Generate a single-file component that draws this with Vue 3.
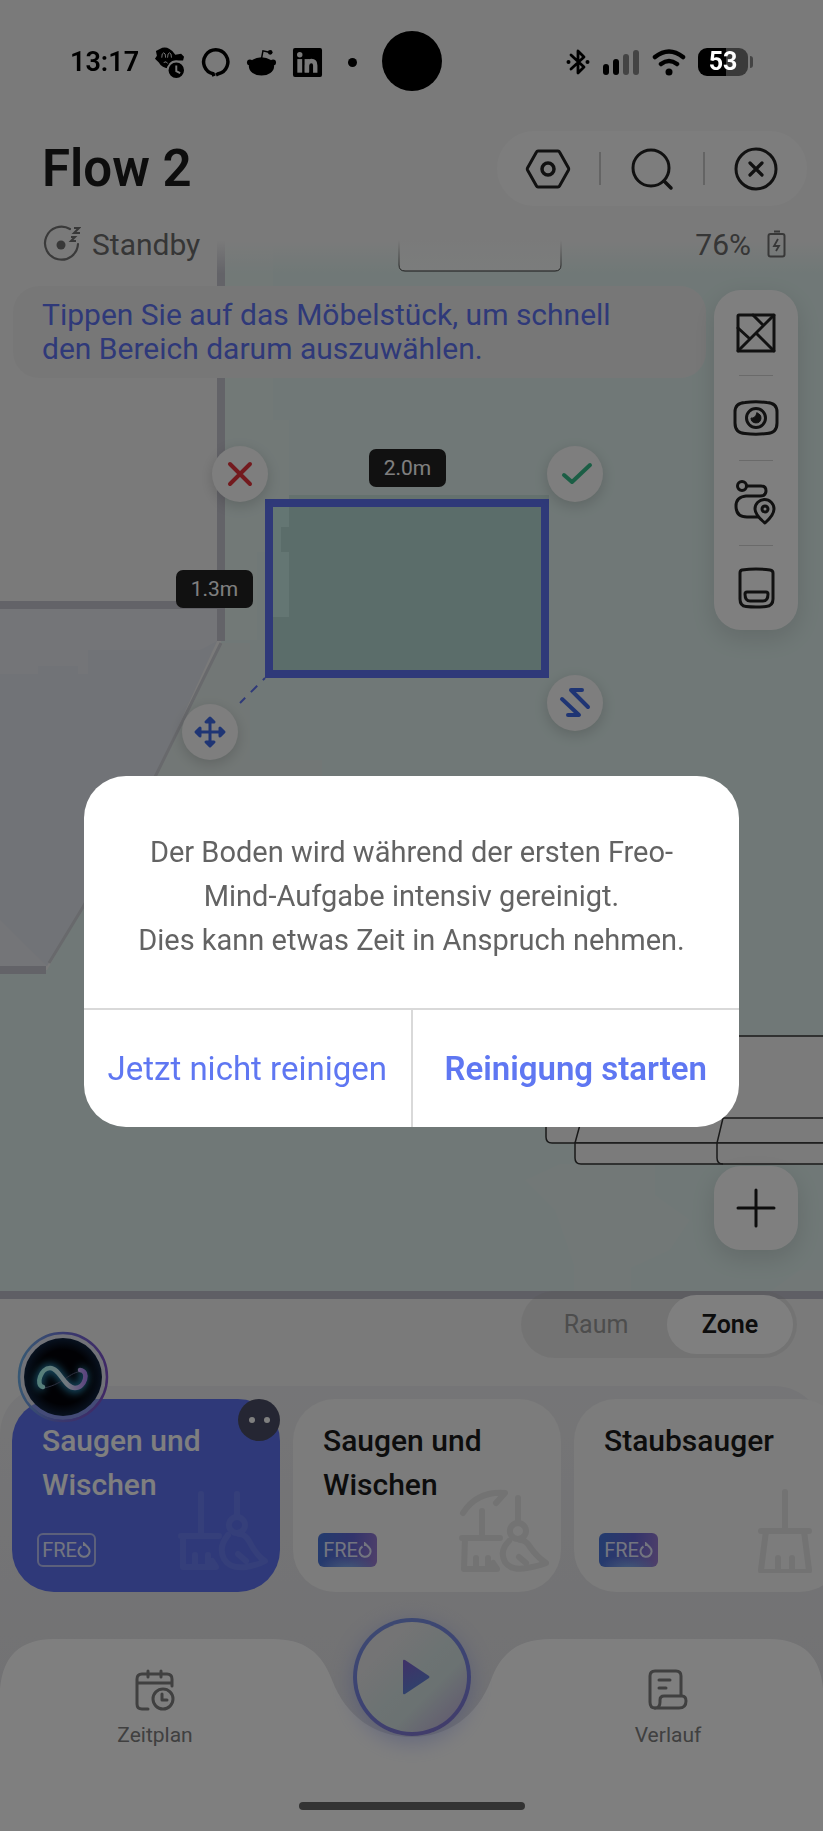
<template>
  <div class="app">
    <div class="status-bar">
      <div class="status-left">
        <span class="time">13:17</span>
        <svg class="sys-icon" viewBox="0 0 32 32" aria-hidden="true">
          <path d="M2 4 L6 2 Q11 -1 16 2 Q20 4 22 8 L28 7 L31 10 L30 14 H22 Q17 14 15 19 L16 22 Q8 22 5 16 L1 12 L3 9 Z" />
          <path d="M8 11 Q8 6 10 6 Q12 6 12 11 M14 11 Q14 6 16 6 Q18 6 18 11 M10 16 Q13 14 14 17" fill="none" stroke="#7a7a7a" stroke-width="1" />
          <circle cx="23" cy="24" r="9" stroke="#7a7a7a" stroke-width="2" />
          <path d="M23 19 V25 L27 27" fill="none" stroke="#7a7a7a" stroke-width="2" />
        </svg>
        <svg class="sys-icon" viewBox="0 0 32 32" aria-hidden="true">
          <path d="M14.5 30 L13.5 27.600 A12.5 12.5 0 1 1 19 27.600 L16.500 29" fill="none" stroke="#000" stroke-width="3.600" />
        </svg>
        <svg class="sys-icon" viewBox="0 0 32 32" aria-hidden="true">
          <ellipse cx="16" cy="20" rx="13" ry="9.500" />
          <circle cx="4" cy="16" r="3" />
          <circle cx="28" cy="16" r="3" />
          <path d="M16 12 L17.500 4 L24 5.500" fill="none" stroke="#000" stroke-width="1.500" />
          <circle cx="25" cy="5.500" r="2.400" />
        </svg>
        <svg class="sys-icon" viewBox="0 0 32 32" aria-hidden="true">
          <rect x="1" y="1" width="30" height="30" rx="2" />
          <g fill="#7a7a7a">
            <circle cx="8" cy="8" r="2.800" />
            <rect x="5.500" y="12.500" width="5" height="14" />
            <rect x="13" y="12.500" width="4.500" height="14" />
          </g>
          <path d="M15.500 26 V19 Q16 14.500 20 14.500 Q24 14.500 24 19 V26.500" fill="none" stroke="#7a7a7a" stroke-width="4.500" />
        </svg>
        <span class="more-dot"></span>
      </div>
      <span class="camera"></span>
      <div class="status-right">
        <svg width="24" height="28" viewBox="0 0 24 28" aria-hidden="true">
          <path d="M5 7 L18 19 L12 25 V3 L18 9 L5 21" fill="none" stroke="#000" stroke-width="2.800" stroke-linejoin="round" stroke-linecap="round" />
          <circle cx="2.500" cy="14" r="2" />
          <circle cx="21.500" cy="14" r="2" />
        </svg>
        <svg width="38" height="28" viewBox="0 0 38 28" aria-hidden="true">
          <rect x="1" y="16" width="6" height="11" rx="3" />
          <rect x="11" y="11" width="6" height="16" rx="3" />
          <rect x="21" y="6" width="6" height="21" rx="3" fill="#444" />
          <rect x="31" y="2" width="6" height="25" rx="3" fill="#444" />
        </svg>
        <svg width="34" height="28" viewBox="0 0 34 28" aria-hidden="true">
          <path d="M3 9 Q17 -2 31 9 M9 16 Q17 10 25 16" fill="none" stroke="#000" stroke-width="4.500" stroke-linecap="round" />
          <circle cx="17" cy="24" r="3.500" />
        </svg>
        <div class="sys-battery"><span class="sys-level">53</span></div>
      </div>
    </div>

    <header class="header">
      <h1 class="title">Flow 2</h1>
      <div class="header-actions">
        <button class="plain" aria-label="Einstellungen">
          <svg width="46" height="46" viewBox="0 0 46 46" class="line">
            <path d="M13 5 H33 Q34 5 34.500 6 L43.500 22 Q44 23 43.500 24 L34.500 40 Q34 41 33 41 H13 Q12 41 11.500 40 L2.500 24 Q2 23 2.500 22 L11.500 6 Q12 5 13 5 Z" />
            <circle cx="23" cy="23" r="6" stroke-width="3.500" />
          </svg>
        </button>
        <span class="bar"></span>
        <button class="plain" aria-label="Suchen">
          <svg width="46" height="46" viewBox="0 0 46 46" class="line">
            <circle cx="22" cy="22" r="18" />
            <path d="M35 35 L42 42" stroke-width="3.500" />
          </svg>
        </button>
        <span class="bar"></span>
        <button class="plain" aria-label="Schließen">
          <svg width="46" height="46" viewBox="0 0 46 46" class="line">
            <circle cx="23" cy="23" r="20" />
            <path d="M17 17 L29 29 M29 17 L17 29" stroke-width="3.200" />
          </svg>
        </button>
      </div>
    </header>

    <main class="map">
      <svg class="floor" viewBox="0 206 823 1180" preserveAspectRatio="xMidYMin slice" aria-hidden="true">
        <rect y="206" width="823" height="1180" fill="#f5f5f5" />
        <path d="M221 206 H823 V1295 H0 V970 H47 L83 907 L155 777 L221 643 Z" fill="#e0f1ee" />
        <path d="M225 206 H273 V420 H289 V552 H257 V640 H221 Z" fill="#e4f2ef" />
        <path d="M221 643 H250 V760 H322 V777 H155 Z" fill="#e5efec" />
        <path d="M525 1180 L560 1164 H655 V1195 L690 1220 L670 1250 L631 1268 V1295 H574 V1265 L555 1210 Z M765 1295 L800 1270 H823 V1295 Z" fill="#e4f0ee" />
        <path d="M0 609 H217 V641 L155 777 L83 907 L47 966 H0 Z" fill="#e9eaf0" />
        <path d="M0 674 H38 V666 H78 V674 H88 V650 H200 L217 641 L155 777 L83 907 L47 966 L20 940 L0 920 Z" fill="#e3e7ee" />
        <path d="M221 643 L155 777 L83 907 L49 963" fill="none" stroke="#d0d2d8" stroke-width="3" />
        <path d="M221 206 V641 M0 605 H218 M0 970 H46" fill="none" stroke="#c6c6d0" stroke-width="8" />
        <path d="M0 1295 H823" stroke="#bfbfca" stroke-width="8" />
        <rect x="0" y="1299" width="823" height="87" fill="#f5f5f5" />

        <path d="M399 206 V265 Q399 271 405 271 H555 Q561 271 561 265 V206 Z" fill="#f6faf9" stroke="#222" stroke-width="1" />
        <g fill="#f7f7f7" stroke="#333" stroke-width="1.500">
          <path d="M546 1036 H830 V1143 H552 Q546 1143 546 1137 Z" />
          <path d="M575 1143 H830 V1164 H581 Q575 1164 575 1158 Z" />
          <path d="M723 1118 H830 M584 1110 L575 1143 M723 1118 L717 1143 V1158 Q717 1164 723 1164" fill="none" />
        </g>

        <path d="M289 495 H549 V499 H289 Z" fill="#c9e2dd" />
        <rect x="269" y="503" width="276" height="171" fill="#b7dad5" />
        <path d="M273 507 H289 V527 H281 V552 H289 V617 H273 Z" fill="#c9ece6" />
        <rect x="269" y="503" width="276" height="171" fill="none" stroke="#5e73f2" stroke-width="8" />
        <path d="M265 678 L240 703" stroke="#5e73f2" stroke-width="2" stroke-dasharray="9 8" stroke-dashoffset="6" />
      </svg>
      <div class="fade"></div>

      <span class="measure measure-w">2.0m</span>
      <span class="measure measure-h">1.3m</span>
      <button class="pin pin-remove" aria-label="Löschen">
        <svg width="56" height="56" viewBox="-28 -28 56 56">
          <path d="M-10 -10 L10 10 M10 -10 L-10 10" stroke="#e6353c" />
        </svg>
      </button>
      <button class="pin pin-confirm" aria-label="Bestätigen">
        <svg width="56" height="56" viewBox="-28 -28 56 56">
          <path d="M-11 1 L-3 8 L15 -9" stroke="#37bd8a" />
        </svg>
      </button>
      <button class="pin pin-move" aria-label="Verschieben">
        <svg class="thin" width="56" height="56" viewBox="-28 -28 56 56">
          <path d="M0 -13 V13 M-13 0 H13" stroke="#3f6ae8" />
          <path d="M0 -14 L-4 -10 H4 Z M0 14 L-4 10 H4 Z M-14 0 L-10 -4 V4 Z M14 0 L10 -4 V4 Z" stroke="#3f6ae8" />
        </svg>
      </button>
      <button class="pin pin-resize" aria-label="Größe ändern">
        <svg width="56" height="56" viewBox="-28 -28 56 56">
          <path d="M7 -13 H-4 L13 4 M-13 -4 L4 12 H-7" stroke="#3f6ae8" />
        </svg>
      </button>

      <div class="map-content">
        <div class="state-row">
          <div class="state">
            <svg width="38" height="38" viewBox="0 0 38 38" aria-hidden="true">
              <path d="M27 4 A16.500 16.500 0 1 0 35 19" fill="none" stroke="#757575" stroke-width="2.200" stroke-linecap="round" />
              <circle cx="18" cy="20" r="4.500" fill="#707070" />
              <path d="M31 3 H36 L31 8 H37 M28 12 H32 L28 16 H33" fill="none" stroke="#707070" stroke-width="2" />
            </svg>
            <span>Standby</span>
          </div>
          <div class="state charge">
            <span>76%</span>
            <svg width="20" height="28" viewBox="0 0 20 28" aria-hidden="true">
              <path d="M7 1.500 H13" stroke="#707070" stroke-width="2" />
              <rect x="1.500" y="4" width="16" height="22.500" rx="2" fill="none" stroke="#707070" stroke-width="2" />
              <path d="M11 9 L7 16 H12 L9 21" fill="none" stroke="#707070" stroke-width="1.800" />
            </svg>
          </div>
        </div>

        <div class="tools-row">
          <p class="hint">Tippen Sie auf das Möbelstück, um schnell<br />den Bereich darum auszuwählen.</p>
          <div class="toolbar">
            <button class="tool" aria-label="Karte">
              <svg width="46" height="46" viewBox="0 0 46 46" class="line">
                <rect x="5" y="5" width="36" height="36" rx="1" />
                <path d="M5 41 L41 5 M5 18 L17 29 M20 5 L30 15 M23 23 L41 41" />
              </svg>
            </button>
            <button class="tool" aria-label="Ansicht">
              <svg width="46" height="46" viewBox="0 0 46 46" class="line">
                <path d="M12 7.500 Q23 6 34 7.500 Q44 8 44 17 V28 Q44 38 34 38.500 Q23 40 12 38.500 Q2 38 2 28 V17 Q2 8 12 7.500 Z" />
                <circle cx="23" cy="23" r="9.500" />
                <path d="M24 18 A5 5 0 1 1 18 23 Q22 24 24 18 Z" fill="#222" stroke-width="1" />
              </svg>
            </button>
            <button class="tool" aria-label="Route">
              <svg width="46" height="46" viewBox="0 0 46 46" class="line">
                <circle cx="9" cy="6" r="4.500" />
                <path d="M14 6 H28 Q33 6 33 11 Q33 16 27 16 H13 Q3 17 3 26 Q3 37 14 37 H25" />
                <path d="M32 43 Q22 35 22 29 A9.500 9.500 0 0 1 41 29 Q41 35 32 43 Z" />
                <circle cx="32" cy="29" r="3" />
              </svg>
            </button>
            <button class="tool" aria-label="Station">
              <svg width="46" height="46" viewBox="0 0 46 46" class="line">
                <path d="M9 5 Q23 3 37 5 Q40 5.500 40 8 V34 Q40 41 33 41.500 Q23 42.500 13 41.500 Q7 41 7 34 V8 Q7 5.500 9 5 Z" />
                <path d="M14 27 H33 Q35 27 35 29 Q35 36 30 36 H17 Q12 36 12 29 Q12 27 14 27 Z" />
              </svg>
            </button>
          </div>
        </div>

        <button class="add" aria-label="Hinzufügen">
          <svg width="40" height="40" viewBox="0 0 40 40">
            <path d="M20 2 V38 M2 20 H38" stroke="#1a1a1a" stroke-width="3" stroke-linecap="round" />
          </svg>
        </button>

        <div class="tabs" role="tablist">
          <button
            v-for="tab in tabs"
            :key="tab"
            class="tab"
            :class="{ active: tab === activeTab }"
            role="tab"
            :aria-selected="tab === activeTab"
            @click="activeTab = tab"
          >{{ tab }}</button>
        </div>
      </div>
    </main>

    <section class="panel">
      <div class="modes">
        <button
          v-for="mode in modes"
          :key="mode.id"
          class="mode"
          :class="{ selected: mode.id === activeMode }"
          @click="activeMode = mode.id"
        >
          <span class="mode-name">{{ mode.name }}</span>
          <span class="freo">
            <span>FRE</span>
            <svg width="14" height="16" viewBox="0 0 14 16" aria-hidden="true">
              <path d="M4.500 4.500 A5.500 5.500 0 1 0 11 5.500 L7 1.500 V4" fill="none" stroke="currentColor" stroke-width="2" />
            </svg>
          </span>
          <svg class="art" viewBox="0 0 90 84" aria-hidden="true">
            <path v-for="(d, i) in mode.art" :key="i" :d="d" />
          </svg>
          <span v-if="mode.id === activeMode" class="eyes"><i></i><i></i></span>
        </button>
      </div>

      <button class="mind" aria-label="Freo Mind">
        <svg width="92" height="92" viewBox="0 0 92 92">
          <defs>
            <linearGradient id="ring" x1="0" y1="0.400" x2="1" y2="0.500">
              <stop offset="0" stop-color="#6fb0e8" />
              <stop offset="0.500" stop-color="#7272dc" />
              <stop offset="1" stop-color="#8052cc" />
            </linearGradient>
            <radialGradient id="disc">
              <stop offset="0.700" stop-color="#020208" />
              <stop offset="1" stop-color="#102440" />
            </radialGradient>
            <linearGradient id="loop">
              <stop offset="0" stop-color="#a8fff4" />
              <stop offset="0.600" stop-color="#e6f2ff" />
              <stop offset="1" stop-color="#b78cff" />
            </linearGradient>
            <filter id="glow" x="-30%" y="-60%" width="160%" height="220%">
              <feGaussianBlur stdDeviation="4" />
            </filter>
          </defs>
          <circle cx="46" cy="46" r="43" fill="#c8cdea" fill-opacity="0.400" />
          <circle cx="46" cy="46" r="44" fill="none" stroke="url(#ring)" stroke-width="2.500" />
          <circle cx="46" cy="46" r="39" fill="url(#disc)" />
          <path d="M26 57 C18 56 23 37 33 37 C43 37 47 58 58 58 C67 58 71 41 63 39" fill="none" stroke="#38b8f0" stroke-width="7" filter="url(#glow)" />
          <path d="M27 57 C48 53 54 38 68 41" fill="none" stroke="#5a6080" stroke-width="1" />
          <path d="M26 56 C18 54 24 37 33 37 C43 37 47 57 58 57 C68 57 73 40 63 39" fill="none" stroke="url(#loop)" stroke-width="4.500" stroke-linecap="round" />
        </svg>
      </button>

      <nav class="bottom-nav">
        <svg class="nav-bg" viewBox="0 0 823 192" preserveAspectRatio="none" aria-hidden="true">
          <path d="M0 192 V50 Q4 0 54 0 H272 C305 0 322 14 332 41 C346 78 376 98 411.500 98 C447 98 477 78 491 41 C501 14 518 0 551 0 H769 Q819 0 823 50 V192 Z" fill="#fff" />
        </svg>
        <a class="nav-item" href="#zeitplan">
          <svg width="42" height="42" viewBox="0 0 42 42" class="nav-icon">
            <path d="M38 17 V10 Q38 5 33 5 H8 Q3 5 3 10 V35 Q3 40 8 40 H14 M3 14 H38 M14 2 V8 M27 2 V8" />
            <circle cx="29" cy="30" r="10" />
            <path d="M28 25 V31 H33" />
          </svg>
          <span>Zeitplan</span>
        </a>
        <a class="nav-item" href="#verlauf">
          <svg width="42" height="42" viewBox="0 0 42 42" class="nav-icon">
            <path d="M8 39 Q3 39 3 33 V7 Q3 2 8 2 H29 Q34 2 34 7 V26 M12 11 H23 M12 19 H19" />
            <path d="M8 39 Q13 39 13 33 V31 Q13 27 17 27 H35 Q39 27 39 32 Q39 39 32 39 Z" />
          </svg>
          <span>Verlauf</span>
        </a>
        <button class="play" aria-label="Starten">
          <svg width="30" height="38" viewBox="0 0 30 38">
            <defs>
              <linearGradient id="tri" x1="0" y1="0" x2="0.400" y2="1">
                <stop offset="0" stop-color="#8062d0" />
                <stop offset="1" stop-color="#5e86d8" />
              </linearGradient>
            </defs>
            <path d="M2 3 Q2 1 4 2 L28 18 Q29 19 28 20 L4 36 Q2 37 2 35 Z" fill="url(#tri)" />
          </svg>
        </button>
        <span class="home-indicator"></span>
      </nav>
    </section>

    <div v-if="dialogOpen" class="overlay">
      <div class="dialog" role="dialog" aria-modal="true" aria-labelledby="dialog-text">
        <p id="dialog-text" class="dialog-text">Der Boden wird während der ersten Freo-<br />Mind-Aufgabe intensiv gereinigt.<br />Dies kann etwas Zeit in Anspruch nehmen.</p>
        <div class="dialog-actions">
          <button class="dialog-btn" @click="dialogOpen = false">Jetzt nicht reinigen</button>
          <button class="dialog-btn primary" @click="dialogOpen = false">Reinigung starten</button>
        </div>
      </div>
    </div>
  </div>
</template>

<script setup>
import { ref } from 'vue';

const dialogOpen = ref(true);

const tabs = ['Raum', 'Zone'];
const activeTab = ref('Zone');

const activeMode = ref(1);
const modes = [
  {
    id: 1,
    name: 'Saugen und Wischen',
    art: [
      'M23 5 V46 M3 47 H41 M5 47 V78 H38 L34 72 M17 66 V78 M30 66 V78',
      'M59 5 V28 M59 28 A8 8 0 1 1 58.900 28 Z',
      'M50 46 Q40 58 46 70 Q52 80 68 78 Q80 76 87 72 Q78 66 71 52 Q67 45 61 45 M60 65 L68 72',
    ],
  },
  {
    id: 2,
    name: 'Saugen und Wischen',
    art: [
      'M4 24 Q18 2 46 4 L37 14',
      'M23 22 V48 M3 49 H41 M6 49 L5 80 H38 L34 74 M17 69 V80 M29 69 V80',
      'M59 9 V33 M59 34 A8 8 0 1 1 58.900 34 Z',
      'M50 52 Q40 62 46 73 Q52 82 68 79 Q80 77 87 74 Q78 68 71 58 Q67 51 61 51 M60 68 L67 74',
    ],
  },
  {
    id: 3,
    name: 'Staubsauger',
    art: ['M45 3 V42 M21 42 H69 M26 42 L21 81 Q21 83 23 83 H67 Q69 83 69 81 L64 42 M38 69 V82 M52 69 V82'],
  },
];
</script>

<style>
body {
  background: #f5f5f5;
}
</style>

<style scoped>
.app {
  position: relative;
  display: flex;
  flex-direction: column;
  min-height: 100vh;
  overflow: hidden;
  background: #f5f5f5;
  color: #1a1a1a;
  font-family: Roboto, "Noto Sans", sans-serif;
}

button {
  border: 0;
  padding: 0;
  background: none;
  font: inherit;
  color: inherit;
  cursor: pointer;
}

svg {
  display: block;
}

.line {
  fill: none;
  stroke: #222;
  stroke-width: 3;
  stroke-linecap: round;
  stroke-linejoin: round;
}

/* 系统状态栏,位于遮罩之上 */
.status-bar {
  position: relative;
  z-index: 20;
  display: flex;
  justify-content: space-between;
  align-items: center;
  height: 124px;
  padding: 0 70px;
  box-sizing: border-box;
  color: #000;
}

.status-left,
.status-right {
  display: flex;
  align-items: center;
}

.status-left {
  gap: 15px;
}

.status-right {
  gap: 12px;
}

.time {
  font-size: 27px;
  font-weight: 600;
}

.sys-icon {
  width: 31px;
  height: 31px;
}

.more-dot {
  width: 9px;
  height: 9px;
  margin-left: 10px;
  border-radius: 50%;
  background: #000;
}

.camera {
  position: absolute;
  left: 50%;
  top: 31px;
  width: 60px;
  height: 60px;
  margin-left: -30px;
  border-radius: 50%;
  background: #000;
}

.sys-battery {
  display: flex;
  align-items: center;
}

.sys-battery::after {
  content: '';
  width: 3px;
  height: 12px;
  margin-left: 2px;
  border-radius: 0 3px 3px 0;
  background: #444;
}

.sys-level {
  width: 50px;
  border-radius: 9px;
  background: linear-gradient(90deg, #000 56%, #3a3a3a 56%);
  color: #fff;
  font-size: 25px;
  font-weight: 700;
  line-height: 28px;
  text-align: center;
}

.header {
  display: flex;
  justify-content: space-between;
  align-items: center;
  padding: 7px 16px 0 42px;
}

.title {
  margin: 0;
  font-size: 51px;
  font-weight: 600;
  line-height: 75px;
}

.header-actions {
  display: flex;
  align-items: center;
  gap: 28px;
  height: 75px;
  padding: 0 28px;
  border-radius: 38px;
  background: #fbfbfb;
}

.bar {
  width: 2px;
  height: 33px;
  background: #c8c8c8;
}

.map {
  position: relative;
  display: flex;
  flex: 1;
  min-height: 1180px;
}

.floor {
  position: absolute;
  inset: 0;
  width: 100%;
  height: 100%;
}

.fade {
  position: absolute;
  top: 0;
  left: 0;
  right: 0;
  height: 68px;
  background: linear-gradient(#f5f5f5 50%, rgba(245, 245, 245, 0));
}

.map-content {
  position: relative;
  display: flex;
  flex: 1;
  flex-direction: column;
  align-items: stretch;
  pointer-events: none;
}

.map-content button {
  pointer-events: auto;
}

.state-row {
  display: flex;
  justify-content: space-between;
  align-items: center;
  height: 76px;
  padding: 0 36px 0 43px;
  color: #6c6c6c;
  font-size: 30px;
}

.state {
  display: flex;
  align-items: center;
  gap: 11px;
}

.charge {
  gap: 16px;
}

.tools-row {
  display: flex;
  align-items: flex-start;
  gap: 8px;
  padding: 4px 25px 0 13px;
}

.hint {
  flex: 1;
  margin: 0;
  padding: 12px 29px;
  border-radius: 26px;
  background: #efefef;
  color: #5e73f2;
  font-size: 30px;
  line-height: 34px;
}

.toolbar {
  display: flex;
  flex-direction: column;
  width: 84px;
  margin-top: 4px;
  border-radius: 27px;
  background: #fff;
  box-shadow: 0 8px 24px rgba(0, 0, 0, 0.12);
}

.tool {
  position: relative;
  display: grid;
  place-items: center;
  height: 85px;
}

.tool + .tool::before {
  content: '';
  position: absolute;
  top: 0;
  left: 25px;
  right: 25px;
  height: 1px;
  background: #d4d4d4;
}

.measure {
  position: absolute;
  width: 77px;
  border-radius: 7px;
  background: #222;
  color: #fff;
  font-size: 21px;
  line-height: 38px;
  text-align: center;
}

.measure-w {
  left: 369px;
  top: 243px;
}

.measure-h {
  left: 176px;
  top: 364px;
}

.pin {
  position: absolute;
  z-index: 2;
  width: 56px;
  height: 56px;
  border-radius: 50%;
  background: #fcfcfc;
  box-shadow: 0 4px 14px rgba(0, 0, 0, 0.16);
}

.pin path {
  fill: none;
  stroke-width: 4;
  stroke-linecap: round;
  stroke-linejoin: round;
}

.thin path {
  stroke-width: 3;
}

.pin-remove {
  left: 212px;
  top: 240px;
}

.pin-confirm {
  left: 547px;
  top: 240px;
}

.pin-move {
  left: 182px;
  top: 498px;
}

.pin-resize {
  left: 547px;
  top: 469px;
}

.add {
  display: grid;
  place-items: center;
  align-self: flex-end;
  width: 84px;
  height: 84px;
  margin: auto 25px 41px 0;
  border-radius: 27px;
  background: #fff;
  box-shadow: 0 8px 24px rgba(0, 0, 0, 0.12);
}

.tabs {
  display: flex;
  align-self: flex-end;
  margin: 0 26px 28px 0;
  padding: 4px;
  border-radius: 34px;
  background: rgba(160, 160, 160, 0.16);
  font-size: 25px;
}

.tab {
  width: 126px;
  height: 59px;
  border-radius: 30px;
  color: #9a9a9a;
}

.tab:first-child {
  width: 142px;
}

.tab.active {
  background: #fff;
  color: #1a1a1a;
  font-weight: 600;
}

.panel {
  position: relative;
  padding-top: 13px;
  border-radius: 48px 48px 0 0;
  background: linear-gradient(#ebebee, #e2e2e5);
}

.modes {
  display: flex;
  gap: 13px;
  overflow: hidden;
  padding: 0 0 47px 12px;
}

.mode {
  position: relative;
  display: flex;
  flex: 0 0 268px;
  flex-direction: column;
  align-items: flex-start;
  justify-content: space-between;
  height: 193px;
  padding: 20px 25px 25px;
  box-sizing: border-box;
  border-radius: 42px;
  background: #f8f8f8;
  text-align: left;
}

.mode.selected {
  background: #5e73f2;
  color: #fff;
}

.mode-name {
  width: 190px;
  padding-left: 5px;
  font-size: 30px;
  font-weight: 500;
  line-height: 44px;
}

.freo {
  display: flex;
  align-items: center;
  justify-content: center;
  width: 59px;
  height: 34px;
  box-sizing: border-box;
  border-radius: 6px;
  background: radial-gradient(ellipse 30px 16px at 50% 110%, #86b8f2, rgba(134, 184, 242, 0)), linear-gradient(100deg, #4a76dc 10%, #6668d8 55%, #a080d4);
  color: #e6eaff;
  font-size: 20px;
  line-height: 34px;
}

.selected .freo {
  border: 2px solid #b8c1f6;
  background: none;
  line-height: 30px;
}

.art {
  position: absolute;
  right: 12px;
  bottom: 19px;
  width: 90px;
  height: 84px;
  fill: none;
  stroke: #e6e6e6;
  stroke-width: 6;
  stroke-linecap: round;
  stroke-linejoin: round;
}

.selected .art {
  stroke: #6b7ef4;
}

.eyes {
  position: absolute;
  top: 0;
  right: 0;
  display: flex;
  align-items: center;
  justify-content: center;
  gap: 9px;
  width: 42px;
  height: 42px;
  border-radius: 50%;
  background: #4a4d66;
}

.eyes i {
  width: 6px;
  height: 6px;
  border-radius: 50%;
  background: #fff;
}

.mind {
  position: absolute;
  left: 17px;
  top: -55px;
  border-radius: 50%;
}

.bottom-nav {
  position: relative;
  display: flex;
  justify-content: space-between;
  min-height: 192px;
}

.nav-bg {
  position: absolute;
  inset: 0;
  width: 100%;
  height: 100%;
}

.nav-item {
  position: relative;
  display: flex;
  flex-direction: column;
  align-items: center;
  gap: 12px;
  width: 310px;
  padding-top: 30px;
  color: #808080;
  font-size: 21px;
  line-height: 25px;
  text-decoration: none;
}

.nav-icon {
  fill: none;
  stroke: #808080;
  stroke-width: 3;
  stroke-linecap: round;
  stroke-linejoin: round;
}

.play {
  position: absolute;
  left: 50%;
  top: -21px;
  display: grid;
  place-items: center;
  width: 118px;
  height: 118px;
  margin-left: -59px;
  padding-left: 8px;
  box-sizing: border-box;
  border: 4px solid transparent;
  border-radius: 50%;
  background: linear-gradient(135deg, #e8e8ea 25%, #d9e6e6 50%, #d6e4e4 65%, #c8c2e0 85%, #dcdce8) padding-box, linear-gradient(160deg, #7a94e4, #7a84e4 60%, #8676d0) border-box;
  box-shadow: 0 6px 22px rgba(94, 115, 242, 0.35);
}

.home-indicator {
  position: absolute;
  left: 50%;
  bottom: 21px;
  width: 226px;
  height: 8px;
  margin-left: -113px;
  border-radius: 4px;
  background: #666;
}

.overlay {
  position: fixed;
  inset: 0;
  z-index: 10;
  display: flex;
  align-items: center;
  justify-content: center;
  padding: 72px 84px 0;
  background: rgba(0, 0, 0, 0.5);
}

.dialog {
  width: 100%;
  overflow: hidden;
  border-radius: 42px;
  background: #fff;
}

.dialog-text {
  margin: 0;
  padding: 54px 20px 46px;
  color: #636363;
  font-size: 29px;
  line-height: 44px;
  text-align: center;
}

.dialog-actions {
  display: flex;
  border-top: 2px solid #d9d9d9;
}

.dialog-btn {
  flex: 1;
  height: 117px;
  color: #5f77f2;
  font-size: 33px;
  white-space: nowrap;
}

.dialog-btn + .dialog-btn {
  border-left: 2px solid #d9d9d9;
}

.primary {
  font-weight: 600;
}
</style>
